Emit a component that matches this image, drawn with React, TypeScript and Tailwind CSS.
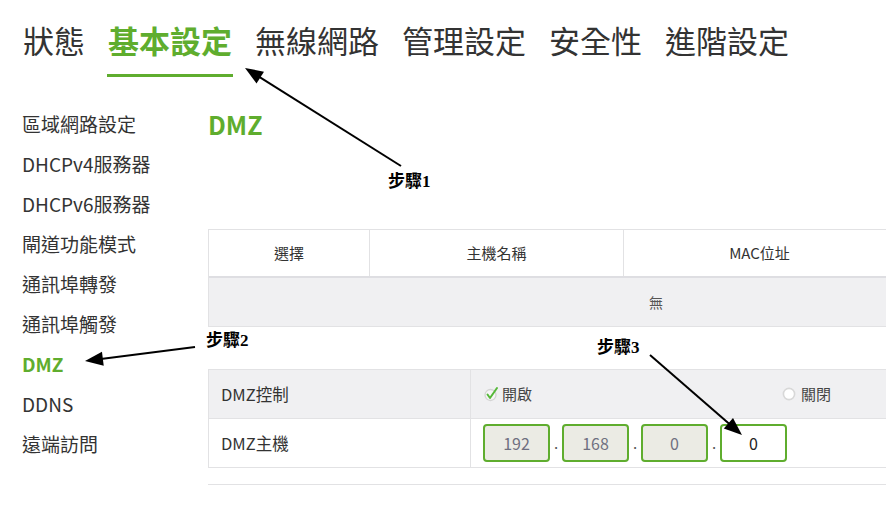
import React from 'react';

const tabs = ['狀態', '基本設定', '無線網路', '管理設定', '安全性', '進階設定'];
const menu = ['區域網路設定', 'DHCPv4服務器', 'DHCPv6服務器', '閘道功能模式', '通訊埠轉發', '通訊埠觸發', 'DMZ', 'DDNS', '遠端訪問'];

type Pt = [number, number];

// arrow head as a triangle pointing at `tip`, coming from `from`
const head = (from: Pt, tip: Pt, len = 18, half = 7) => {
  const dx = tip[0] - from[0];
  const dy = tip[1] - from[1];
  const d = Math.hypot(dx, dy);
  const ux = dx / d;
  const uy = dy / d;
  const bx = tip[0] - ux * len;
  const by = tip[1] - uy * len;
  return `${tip[0]},${tip[1]} ${bx - uy * half},${by + ux * half} ${bx + uy * half},${by - ux * half}`;
};

const Arrow: React.FC<{ from: Pt; tip: Pt }> = ({ from, tip }) => {
  const dx = tip[0] - from[0];
  const dy = tip[1] - from[1];
  const d = Math.hypot(dx, dy);
  const end: Pt = [tip[0] - (dx / d) * 14, tip[1] - (dy / d) * 14];
  return (
    <g>
      <line x1={from[0]} y1={from[1]} x2={end[0]} y2={end[1]} stroke="#000" strokeWidth={2} />
      <polygon points={head(from, tip)} fill="#000" />
    </g>
  );
};

const Step: React.FC<{ label: string; className: string }> = ({ label, className }) => (
  <span
    className={`absolute text-[17px] font-bold leading-none text-black ${className}`}
    style={{ fontFamily: '"Liberation Serif", "Noto Sans CJK TC", serif' }}
  >
    {label}
  </span>
);

const IpBox: React.FC<{ value: string; editable?: boolean }> = ({ value, editable }) => (
  <div
    className={`flex h-[38px] w-[67px] items-center justify-center rounded-[4px] border-2 border-[#5fad2e] text-[16px] ${
      editable ? 'bg-white text-[#222]' : 'bg-[#ebebe4] text-[#6f7080]'
    }`}
  >
    {value}
  </div>
);

const App: React.FC = () => {
  return (
    <div
      className="relative h-[525px] w-[886px] overflow-hidden bg-white text-[#333]"
      style={{ fontFamily: '"Noto Sans CJK TC", "Noto Sans", sans-serif' }}
    >
      {/* top tabs */}
      <nav className="flex gap-[23px] pl-[23px] pt-[22px]">
        {tabs.map((t) => (
          <div
            key={t}
            className={`text-[31px] leading-[36px] ${
              t === '基本設定'
                ? '-mx-[1px] border-b-[3px] border-[#5fad2e] px-[1px] pb-[16px] font-semibold text-[#5fad2e]'
                : 'text-[#333]'
            }`}
          >
            {t}
          </div>
        ))}
      </nav>

      <div className="flex">
        {/* side menu */}
        <aside className="flex w-[208px] shrink-0 flex-col pl-[22px] pt-[27px]">
          {menu.map((m) => (
            <div
              key={m}
              className={`h-[40px] text-[19px] leading-[40px] ${
                m === 'DMZ' ? 'font-bold text-[#5fad2e]' : 'text-[#333]'
              }`}
            >
              {m}
            </div>
          ))}
        </aside>

        <main className="w-[720px] shrink-0 pt-[27px]">
          <h1 className="text-[25px] font-bold leading-[40px] text-[#5fad2e]">DMZ</h1>

          {/* client list */}
          <div className="mt-[85px] border border-[#e2e2e4] text-[15px]">
            <div className="flex h-[48px] items-center border-b-2 border-[#dedee2] bg-white">
              <div className="flex h-full w-[161px] items-center justify-center border-r border-[#e2e2e4]">選擇</div>
              <div className="flex h-full w-[254px] items-center justify-center border-r border-[#e2e2e4]">主機名稱</div>
              <div className="flex h-full flex-1 items-center justify-center pr-[32px]">MAC位址</div>
            </div>
            <div className="flex h-[48px] items-center bg-[#f0f0f2] pl-[440px] text-[14px] text-[#555]">無</div>
          </div>

          {/* dmz settings */}
          <div className="mt-[42px] border border-[#e2e2e4] text-[15px]">
            <div className="flex h-[49px] border-b border-[#e2e2e4] bg-[#f0f0f2]">
              <div className="flex w-[262px] items-center border-r border-[#e2e2e4] pl-[12px] text-[16.5px]">DMZ控制</div>
              <div className="flex flex-1 items-center pl-[13px]">
                <svg width="16" height="16" viewBox="0 0 16 16" className="mr-[2px]">
                  <circle cx="6.5" cy="9" r="5.5" fill="#f6f6f6" stroke="#d4d4d4" strokeWidth="1.3" />
                  <path d="M3.5 8.5 L6 12 L13 2" fill="none" stroke="#56b83a" strokeWidth="2" strokeLinecap="round" strokeLinejoin="round" />
                </svg>
                <span className="text-[#444]">開啟</span>
                <svg width="14" height="14" viewBox="0 0 14 14" className="ml-[250px] mr-[5px]">
                  <circle cx="7" cy="7" r="5.6" fill="#fff" stroke="#d8d8d8" strokeWidth="1.6" />
                </svg>
                <span className="text-[#444]">關閉</span>
              </div>
            </div>
            <div className="flex h-[48px]">
              <div className="flex w-[262px] items-center border-r border-[#e2e2e4] pl-[12px] text-[16.5px]">DMZ主機</div>
              <div className="flex flex-1 items-center pl-[12px]">
                <IpBox value="192" />
                <span className="w-[12px] text-center text-[#555]">.</span>
                <IpBox value="168" />
                <span className="w-[12px] text-center text-[#555]">.</span>
                <IpBox value="0" />
                <span className="w-[12px] text-center text-[#555]">.</span>
                <IpBox value="0" editable />
              </div>
            </div>
          </div>

          <div className="mt-[16px] border-t border-[#e2e2e4]" />
        </main>
      </div>

      {/* step annotations */}
      <svg className="pointer-events-none absolute left-0 top-0" width="886" height="525">
        <Arrow from={[401, 166]} tip={[245, 68]} />
        <Arrow from={[195, 347]} tip={[85, 361]} />
        <Arrow from={[650, 355]} tip={[742, 435]} />
      </svg>
      <Step label="步驟1" className="left-[388px] top-[173px]" />
      <Step label="步驟2" className="left-[206px] top-[332px]" />
      <Step label="步驟3" className="left-[597px] top-[339px]" />
    </div>
  );
};

export default App;
